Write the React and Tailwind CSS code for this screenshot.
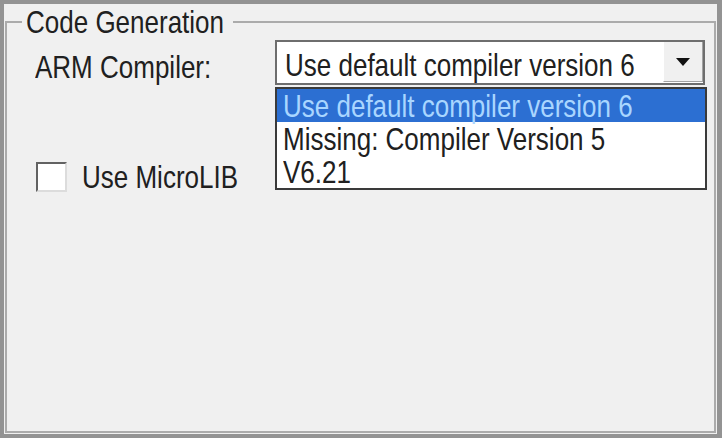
import React from "react";

const items = [
  "Use default compiler version 6",
  "Missing: Compiler Version 5",
  "V6.21",
];

// the old dialog font is tall and narrow: stretch Arial a bit in height
function Txt({ children }) {
  return (
    <span className="inline-block scale-y-[1.23] whitespace-nowrap">
      {children}
    </span>
  );
}

function ComboBox({ value, options, selected }) {
  return (
    <div className="relative">
      <div className="w-[430px] h-[45px] border-2 border-[#6e6e6e] bg-white flex">
        <div className="flex-1 min-w-0 pl-[8px] pt-[11px] leading-[24px]">
          <Txt>{value}</Txt>
        </div>
        <div className="shrink-0 w-[40px] h-[40px] bg-[#f0f0f0] border-l border-l-white border-r border-b border-[#a2a2a2] flex items-center justify-center">
          <svg width="14" height="8" viewBox="0 0 14 8">
            <polygon points="0,0 14,0 7,8" fill="#111" />
          </svg>
        </div>
      </div>

      {/* open list, lies over the checkbox row */}
      <div className="absolute left-0 top-[47px] w-[432px] border-2 border-[#3a3a3a] bg-white">
        {options.map((opt, i) => (
          <div
            key={opt}
            className={`h-[33px] pl-[6px] leading-[35px] ${
              i === selected ? "bg-[#2c6fd2] text-[#a9d6ff]" : ""
            }`}
          >
            <Txt>{opt}</Txt>
          </div>
        ))}
      </div>
    </div>
  );
}

export default function App() {
  return (
    <div className="w-[722px] h-[438px] bg-[#939393] pt-[4px] pl-[4px] pr-[5px] pb-[4px] text-[26px] text-[#202020] font-['Liberation_Sans',Arial,sans-serif]">
      <div className="h-full bg-[#f0f0f0] pl-[1px] pr-[1px] pt-[6px] pb-[1px] flex flex-col">
        <fieldset className="flex-1 border-2 border-[#ababab]">
          <legend className="ml-[15px] pl-[4px] pr-[9px] leading-[24px]">
            <Txt>Code Generation</Txt>
          </legend>

          <div className="pl-[28px] pt-[6px]">
            <div className="flex items-start">
              <div className="w-[240px] shrink-0 pt-[15px] leading-[24px]">
                <Txt>ARM Compiler:</Txt>
              </div>
              <ComboBox value={items[0]} options={items} selected={0} />
            </div>

            <div className="mt-[77px] ml-[1px] flex items-center gap-[15px]">
              <div className="w-[31px] h-[30px] bg-white border-2 border-t-[#626262] border-l-[#626262] border-r-[#dcdcdc] border-b-[#dcdcdc]" />
              <span className="leading-[24px]">
                <Txt>Use MicroLIB</Txt>
              </span>
            </div>
          </div>
        </fieldset>
      </div>
    </div>
  );
}
